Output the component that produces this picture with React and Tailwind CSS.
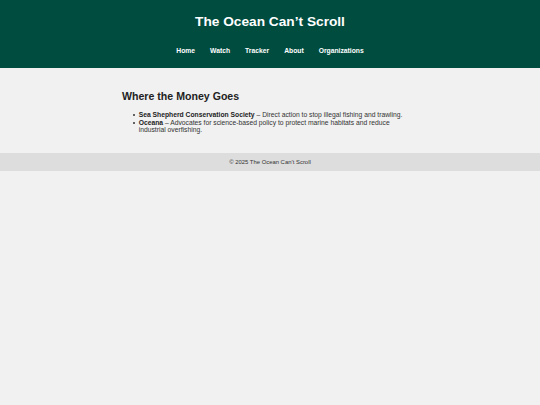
import React from 'react';

const NAV = ['Home', 'Watch', 'Tracker', 'About', 'Organizations'];

const ORGS = [
  { name: 'Sea Shepherd Conservation Society', text: 'Direct action to stop illegal fishing and trawling.' },
  { name: 'Oceana', text: 'Advocates for science-based policy to protect marine habitats and reduce industrial overfishing.' },
];

export default function App() {
  return (
    <div className="min-h-screen bg-[#f1f1f1] text-[#333] font-['Liberation_Sans',Arial,sans-serif]">
      <header className="bg-[#004d40] text-white text-center pt-[14px] pb-[13.5px]">
        <h1 className="text-[13.7px] leading-[16px] font-bold">The Ocean Can’t Scroll</h1>
        <nav className="mt-[16.5px] flex justify-center gap-[15px] text-[6.75px] leading-[8px] font-bold">
          {NAV.map((item) => (
            <a key={item} href="#" className="text-white">
              {item}
            </a>
          ))}
        </nav>
      </header>

      <main className="w-[296px] mx-auto pt-[22.4px] pb-[19.3px]">
        <h2 className="text-[10.6px] leading-[12px] font-bold text-[#222]">Where the Money Goes</h2>
        <ul className="mt-[8.8px] text-[6.75px] leading-[7.5px]">
          {ORGS.map((org) => (
            <li key={org.name} className="flex items-start ml-[11px]">
              <span className="shrink-0 mt-[3.2px] mr-[4px] w-[1.7px] h-[1.7px] rounded-full bg-[#333]" />
              <span>
                <strong className="font-bold text-[#222]">{org.name}</strong> – {org.text}
              </span>
            </li>
          ))}
        </ul>
      </main>

      <footer className="bg-[#dddddd] h-[18px] flex items-center justify-center text-[5.9px] text-[#333]">
        © 2025 The Ocean Can’t Scroll
      </footer>
    </div>
  );
}
